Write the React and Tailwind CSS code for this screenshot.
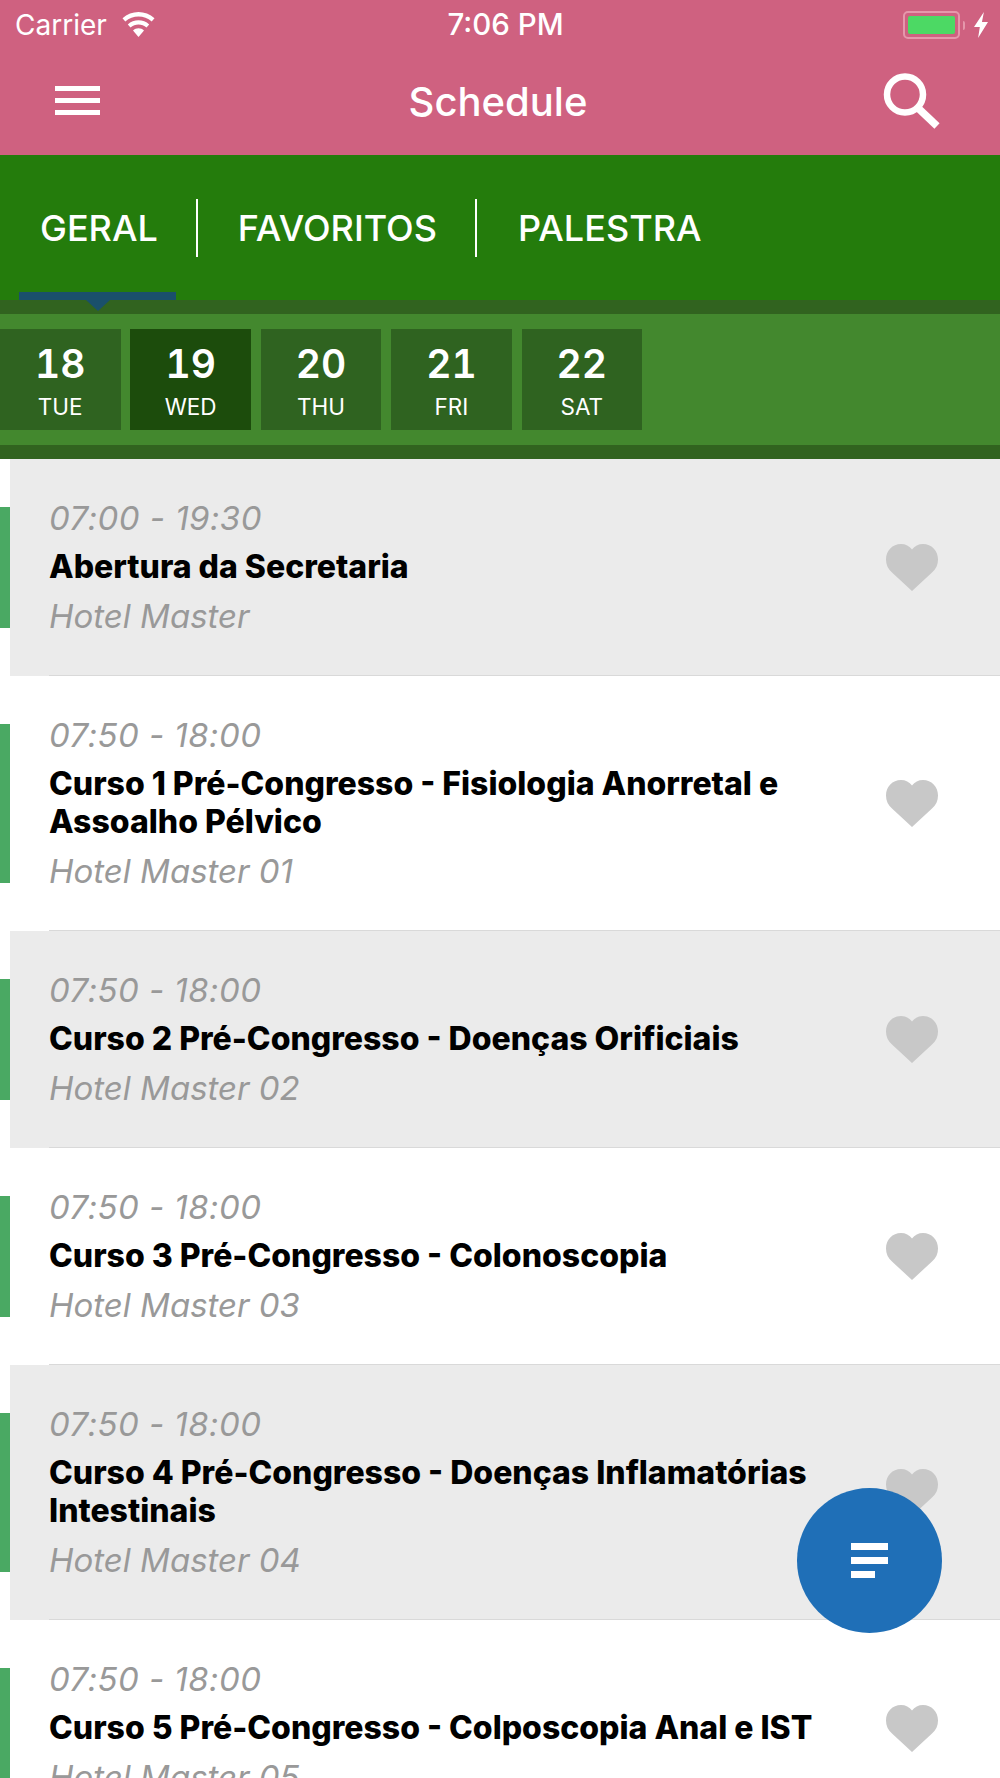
const rows = [
  { time: "07:00 - 19:30", title: "Abertura da Secretaria", place: "Hotel Master", grey: true },
  { time: "07:50 - 18:00", title: "Curso 1 Pré-Congresso - Fisiologia Anorretal e Assoalho Pélvico", place: "Hotel Master 01" },
  { time: "07:50 - 18:00", title: "Curso 2 Pré-Congresso - Doenças Orificiais", place: "Hotel Master 02", grey: true },
  { time: "07:50 - 18:00", title: "Curso 3 Pré-Congresso - Colonoscopia", place: "Hotel Master 03" },
  { time: "07:50 - 18:00", title: "Curso 4 Pré-Congresso - Doenças Inflamatórias Intestinais", place: "Hotel Master 04", grey: true },
  { time: "07:50 - 18:00", title: "Curso 5 Pré-Congresso - Colposcopia Anal e IST", place: "Hotel Master 05" },
];
const days = [["18", "TUE"], ["19", "WED"], ["20", "THU"], ["21", "FRI"], ["22", "SAT"]];

function Heart() {
  return (
    <svg width="52" height="47" viewBox="0 0 52 47" className="shrink-0">
      <path d="M26 47 L6 28.5 C2 24.8 0 21 0 15.5 C0 6.5 6.5 0 15 0 C19.5 0 23.5 2 26 5.5 C28.5 2 32.5 0 37 0 C45.5 0 52 6.5 52 15.5 C52 21 50 24.8 46 28.5 Z" fill="#c8c8c8" />
    </svg>
  );
}

function Row({ r }) {
  return (
    <div className="flex">
      <div className="w-[10px] shrink-0 py-12 flex">
        <div className="w-full bg-[#4aa963]" />
      </div>
      <div className={`flex-1 min-w-0 pl-[39px] ${r.grey ? "bg-[#ebebeb]" : "bg-white"}`}>
        <div className="flex items-center border-b border-[#d9d9d9] pt-[39px] pb-[39px] pr-[62px]">
          <div className="flex-1 min-w-0 pr-[30px]">
            <div className="text-[33px] leading-[40px] italic tracking-[0.44px] text-[#999999] whitespace-nowrap">{r.time}</div>
            <div className="mt-[10px] text-[32px] leading-[38px] font-extrabold text-black">{r.title}</div>
            <div className="mt-[10px] text-[33px] leading-[40px] italic text-[#999999] whitespace-nowrap">{r.place}</div>
          </div>
          <Heart />
        </div>
      </div>
    </div>
  );
}

export default function App() {
  return (
    <div className="relative w-[1000px] h-[1778px] overflow-hidden bg-white font-['Inter',sans-serif]">
      <header className="h-[155px] bg-[#cf6180] text-white">
        <div className="h-[50px] flex items-center justify-between pl-[15px] pr-[12px]">
          <div className="flex-1 flex items-center gap-[14px]">
            <span className="text-[28px] leading-none font-normal">Carrier</span>
            <svg width="35" height="25" viewBox="0 0 35 25" className="mb-[2px]">
              <path d="M17.5 25 L12 18.5 C15 15.6 20 15.6 23 18.5 Z" fill="#fff" />
              <path d="M9.5 15.6 L6.8 12.4 C12.6 7 22.4 7 28.2 12.4 L25.5 15.6 C21 11.4 14 11.4 9.5 15.6 Z" fill="#fff" />
              <path d="M4.3 9.5 L1.5 6.2 C10.5 -2 24.5 -2 33.5 6.2 L30.7 9.5 C23.2 2.7 11.8 2.7 4.3 9.5 Z" fill="#fff" />
            </svg>
          </div>
          <span className="ml-[8px] text-[29.5px] leading-none font-medium">7:06 PM</span>
          <div className="flex-1 flex items-center justify-end gap-[9px]">
            <div className="flex items-center gap-[3px]">
              <div className="w-[57px] h-[28px] rounded-[5px] border-2 border-[#e597ab] p-[3px]">
                <div className="w-full h-full rounded-[2px] bg-[#4cd964]" />
              </div>
              <div className="w-[2px] h-[9px] rounded-r bg-[#e597ab]" />
            </div>
            <svg width="14" height="26" viewBox="0 0 12 25" preserveAspectRatio="none">
              <path d="M8.5 0 L0 14.5 H5 L3.5 25 L12 9.5 H6.8 Z" fill="#fff" />
            </svg>
          </div>
        </div>
        <div className="h-[105px] flex items-center pl-[55px] pr-[59px]">
          <div className="flex-1">
            <div className="flex flex-col gap-[7px] mb-[5px]">
              <div className="w-[45px] h-[5px] bg-white" />
              <div className="w-[45px] h-[5px] bg-white" />
              <div className="w-[45px] h-[5px] bg-white" />
            </div>
          </div>
          <span className="text-[40px] leading-none font-medium mb-[2px]">Schedule</span>
          <div className="flex-1 flex justify-end">
            <svg width="58" height="56" viewBox="0 0 58 56" className="mb-[4px]">
              <circle cx="22" cy="21.5" r="18" fill="none" stroke="#fff" strokeWidth="6.5" />
              <path d="M35 35 L54 53" stroke="#fff" strokeWidth="7.5" strokeLinecap="butt" />
            </svg>
          </div>
        </div>
      </header>

      <nav className="h-[145px] bg-[#247c0c] flex items-center text-white text-[36px] font-medium leading-none">
        <div className="relative pl-[40px] pr-[38px] h-[58px] flex items-center border-r-2 border-white">
          GERAL
          <div className="absolute left-[19px] w-[157px] top-[93.5px] h-[8px] bg-[#1a506b]" />
          <div className="absolute left-[86px] top-[101.5px] w-0 h-0 border-l-[12px] border-r-[12px] border-t-[11px] border-l-transparent border-r-transparent border-t-[#1a506b] z-10" />
        </div>
        <div className="pl-[40px] pr-[38px] h-[58px] flex items-center border-r-2 border-white">FAVORITOS</div>
        <div className="pl-[41px] h-[58px] flex items-center">PALESTRA</div>
      </nav>

      <div className="border-y-[14px] border-[#31631f] bg-[#43882e] py-[15px] flex gap-[9.9px]">
        {days.map(([n, d], i) => (
          <div key={n} className={`w-[120.5px] h-[101px] flex flex-col items-center text-white ${i === 1 ? "bg-[#1c4c0c]" : "bg-[#2f6320]"}`}>
            <span className="mt-[15px] text-[39px] leading-[40px] font-semibold tabular-nums">{n}</span>
            <span className="mt-[10px] text-[22.5px] leading-[26px] font-normal">{d}</span>
          </div>
        ))}
      </div>

      <div>
        {rows.map((r, i) => <Row key={i} r={r} />)}
      </div>

      <div className="absolute left-[797px] top-[1488px] w-[145px] h-[145px] rounded-full bg-[#1f6fb7] flex flex-col items-start justify-center gap-[7px] pl-[54px]">
        <div className="w-[37px] h-[7px] bg-white" />
        <div className="w-[37px] h-[7px] bg-white" />
        <div className="w-[24px] h-[7px] bg-white" />
      </div>
    </div>
  );
}
